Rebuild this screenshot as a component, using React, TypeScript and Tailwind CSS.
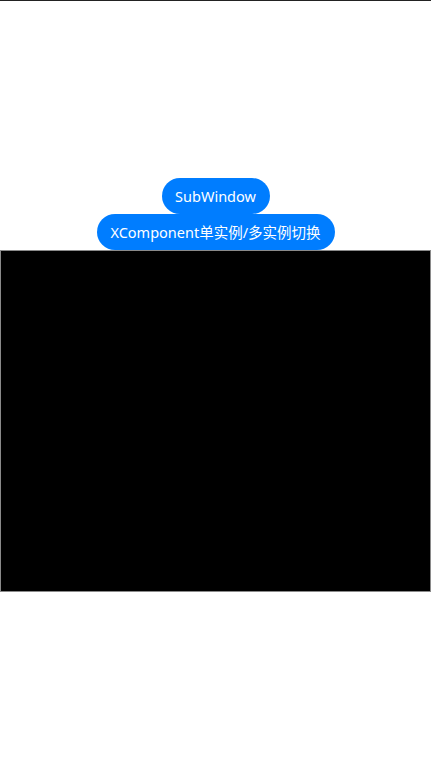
import React from 'react';

const App: React.FC = () => {
  return (
    <div className="w-[431px] h-[767px] bg-white flex flex-col font-['Noto_Sans','Noto_Sans_CJK_SC',sans-serif] overflow-hidden">
      {/* status line */}
      <div className="h-px bg-[#222222]" />

      <div className="h-[177px]" />

      {/* buttons */}
      <div className="flex flex-col items-center">
        <button className="h-9 w-[108px] rounded-full bg-[#007dff] text-white text-[14.5px] leading-none flex items-center justify-center">
          SubWindow
        </button>
        <button className="h-9 w-[238px] rounded-full bg-[#007dff] text-white text-[14.5px] leading-none flex items-center justify-center">
          XComponent单实例/多实例切换
        </button>
      </div>

      {/* XComponent surface */}
      <div className="h-[342px] bg-black border border-[#8a8a8a]" />
    </div>
  );
};

export default App;
